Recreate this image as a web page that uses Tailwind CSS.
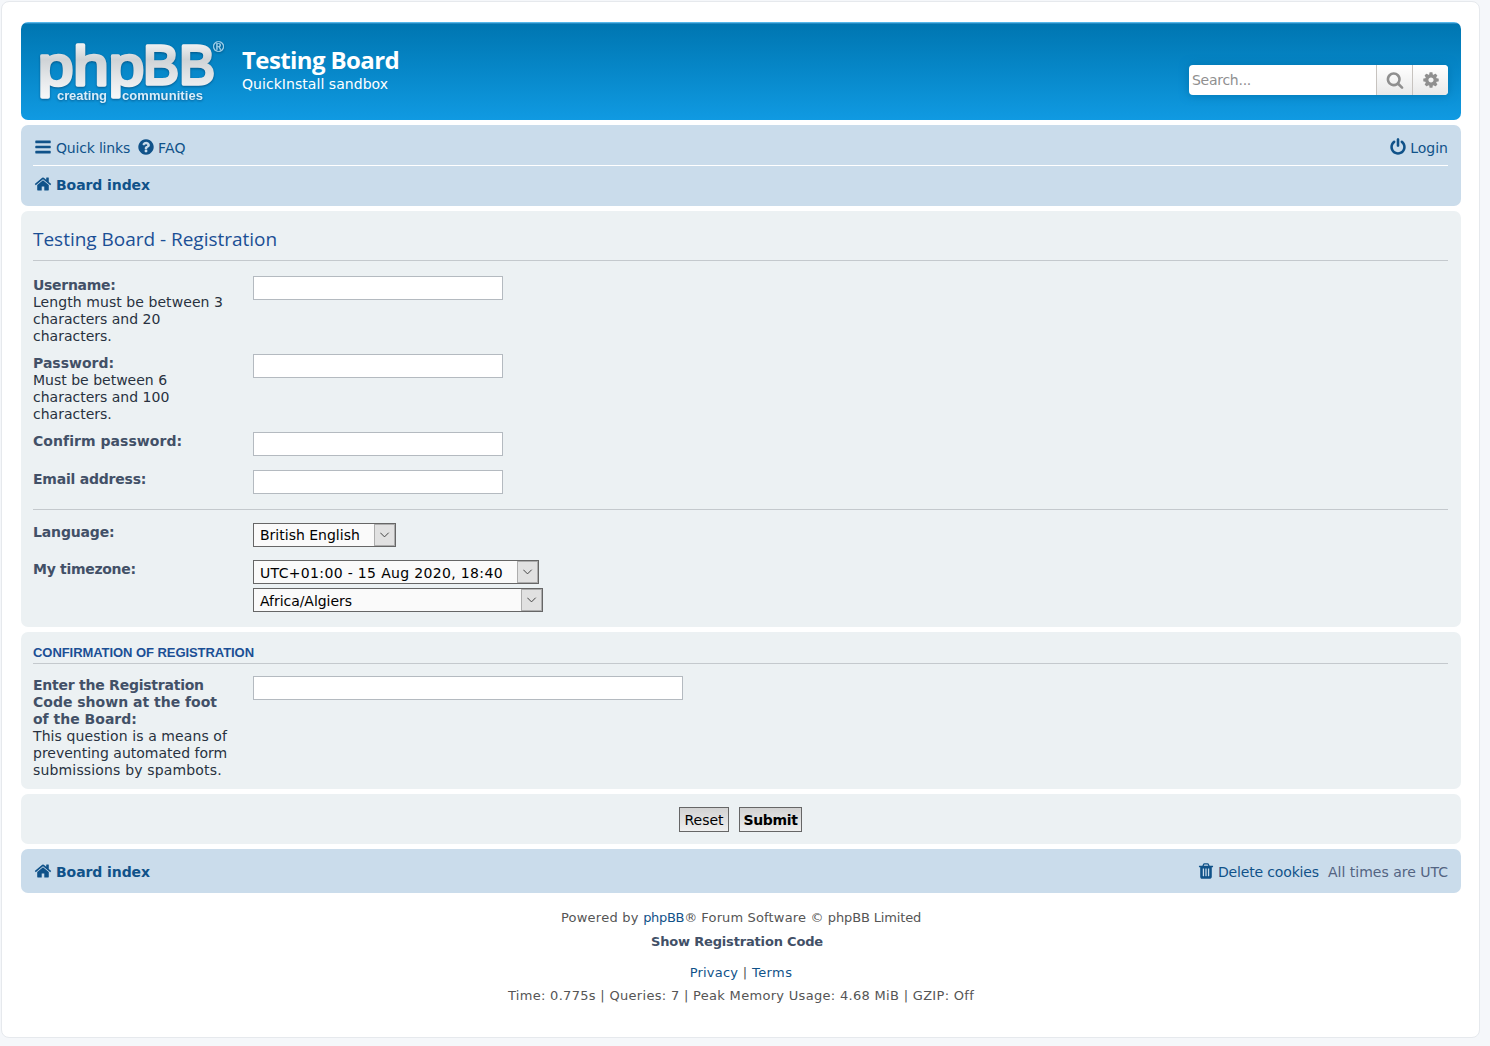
<!DOCTYPE html>
<html lang="en">
<head>
  <meta charset="UTF-8" />
  <meta name="viewport" content="width=device-width, initial-scale=1.0"/>
  <title>Testing Board - Registration</title>
  <script src="https://cdn.jsdelivr.net/npm/@tailwindcss/browser@4"></script>
</head>
<body class="bg-[#f5f7fa] p-px font-['DejaVu_Sans',sans-serif] text-[14px] leading-[17px] text-[#28313f]">

  <!-- Icon set -->
  <svg class="hidden">
    <symbol id="home" viewBox="0 0 1792 1792"><path d="M1472 992v480q0 26-19 45t-45 19h-384v-384h-256v384h-384q-26 0-45-19t-19-45v-480q0-1 .5-3t.5-3l575-474 575 474q1 2 1 6zm223-69l-62 74q-8 9-21 11h-3q-13 0-21-7l-692-577-692 577q-12 8-24 7-13-2-21-11l-62-74q-8-10-7-23.5t11-21.5l719-599q32-26 76-26t76 26l244 204v-195q0-14 9-23t23-9h192q14 0 23 9t9 23v408l219 182q10 8 11 21.5t-7 23.5z"/></symbol>
    <symbol id="bars" viewBox="0 0 1792 1792"><path d="M1664 1344v128q0 26-19 45t-45 19h-1408q-26 0-45-19t-19-45v-128q0-26 19-45t45-19h1408q26 0 45 19t19 45zm0-512v128q0 26-19 45t-45 19h-1408q-26 0-45-19t-19-45v-128q0-26 19-45t45-19h1408q26 0 45 19t19 45zm0-512v128q0 26-19 45t-45 19h-1408q-26 0-45-19t-19-45v-128q0-26 19-45t45-19h1408q26 0 45 19t19 45z"/></symbol>
    <symbol id="question" viewBox="0 0 1792 1792"><path d="M1024 1376v-192q0-14-9-23t-23-9h-192q-14 0-23 9t-9 23v192q0 14 9 23t23 9h192q14 0 23-9t9-23zm256-672q0-88-55.500-163t-138.500-116-170-41q-243 0-371 213-15 24 8 42l132 100q7 6 19 6 16 0 25-12 53-68 86-92 34-24 86-24 48 0 85.500 26t37.500 59q0 38-20 61t-68 45q-63 28-115.500 86.500t-52.500 125.500v36q0 14 9 23t23 9h192q14 0 23-9t9-23q0-19 21.500-49.500t54.500-49.500q32-18 49-28.500t46-35 44.500-48 28-60.500 12.500-81zm384 192q0 209-103 385.500t-279.500 279.500-385.500 103-385.500-103-279.500-279.500-103-385.500 103-385.500 279.500-279.500 385.500-103 385.500 103 279.500 279.500 103 385.500z"/></symbol>
    <symbol id="power" viewBox="0 0 1792 1792"><path d="M1664 896q0 156-61 298t-164 245-245 164-298 61-298-61-245-164-164-245-61-298q0-182 80.500-343t226.500-270q43-32 95.500-25t83.500 50q32 42 24.500 94.500t-49.500 84.500q-98 74-151.500 181t-53.500 228q0 104 40.500 198.500t109.500 163.500 163.500 109.500 198.500 40.500 198.500-40.500 163.500-109.500 109.500-163.500 40.500-198.500q0-121-53.500-228t-151.500-181q-42-32-49.500-84.500t24.500-94.500q31-43 84-50t95 25q146 109 226.500 270t80.500 343zm-640-768v640q0 52-38 90t-90 38-90-38-38-90v-640q0-52 38-90t90-38 90 38 38 90z"/></symbol>
    <symbol id="search" viewBox="0 0 1792 1792"><path d="M1216 832q0-185-131.500-316.500t-316.500-131.500-316.500 131.500-131.500 316.500 131.500 316.500 316.500 131.500 316.500-131.500 131.500-316.500zm512 832q0 52-38 90t-90 38q-54 0-90-38l-343-342q-179 124-399 124-143 0-273.500-55.500t-225-150-150-225-55.500-273.500 55.500-273.500 150-225 225-150 273.500-55.500 273.500 55.500 225 150 150 225 55.500 273.500q0 220-124 399l343 343q37 37 37 90z"/></symbol>
    <symbol id="cog" viewBox="0 0 1792 1792"><path d="M1152 896q0-106-75-181t-181-75-181 75-75 181 75 181 181 75 181-75 75-181zm512-109v222q0 12-8 23t-20 13l-185 28q-19 54-39 91 35 50 107 138 10 12 10 25t-9 23q-27 37-99 108t-94 71q-12 0-26-9l-138-108q-44 23-91 38-16 136-29 186-7 28-36 28h-222q-14 0-24.500-8.500t-11.500-21.500l-28-184q-49-16-90-37l-141 107q-10 9-25 9-14 0-25-11-126-114-165-168-7-10-7-23 0-12 8-23 15-21 51-66.500t54-70.500q-27-50-41-99l-183-27q-13-2-21-12.500t-8-23.500v-222q0-12 8-23t19-13l186-28q14-46 39-92-40-57-107-138-10-12-10-24 0-10 9-23 26-36 98.500-107.500t94.500-71.500q13 0 26 10l138 107q44-23 91-38 16-136 29-186 7-28 36-28h222q14 0 24.500 8.500t11.500 21.500l28 184q49 16 90 37l142-107q9-9 24-9 13 0 25 10 129 119 165 170 7 8 7 22 0 12-8 23-15 21-51 66.500t-54 70.500q26 50 41 98l183 28q13 2 21 12.500t8 23.500z"/></symbol>
    <symbol id="trash" viewBox="0 0 1792 1792"><path d="M704 1376v-704q0-14-9-23t-23-9h-64q-14 0-23 9t-9 23v704q0 14 9 23t23 9h64q14 0 23-9t9-23zm256 0v-704q0-14-9-23t-23-9h-64q-14 0-23 9t-9 23v704q0 14 9 23t23 9h64q14 0 23-9t9-23zm256 0v-704q0-14-9-23t-23-9h-64q-14 0-23 9t-9 23v704q0 14 9 23t23 9h64q14 0 23-9t9-23zm-544-992h448l-48-117q-7-9-17-11h-317q-10 2-17 11zm928 32v64q0 14-9 23t-23 9h-96v948q0 83-47 143.500t-113 60.500h-832q-66 0-113-58.500t-47-141.500v-952h-96q-14 0-23-9t-9-23v-64q0-14 9-23t23-9h309l70-167q15-37 54-63t79-26h320q40 0 79 26t54 63l70 167h309q14 0 23 9t9 23z"/></symbol>
    <symbol id="chevron" viewBox="0 0 10 6"><path d="M.3.7L4.500 4.900 8.700.7" fill="none" stroke="#444" stroke-width="1"/></symbol>
  </svg>

  <div class="h-[1037px] w-[1479px] rounded-lg border border-[#e6e9ed] bg-white pt-5 pl-[19px]">
    <div class="flex w-[1440px] flex-col gap-[5px]">

      <!-- Header -->
      <header class="flex h-[98px] items-start rounded-[7px] bg-linear-to-b from-[#6aceff] from-0% via-[#0076b1] via-[2px] to-[#109ae2] pr-[13px] pl-[13px] text-white">
        <svg class="mt-3 h-[80px] w-[208px] shrink-0 overflow-visible" viewBox="0 0 208 80">
          <defs>
            <linearGradient id="silver" gradientUnits="userSpaceOnUse" x1="0" y1="8" x2="0" y2="66">
              <stop offset="0" stop-color="#f4f5f6"/>
              <stop offset=".3" stop-color="#cfd3d6"/>
              <stop offset=".7" stop-color="#e9ebed"/>
              <stop offset="1" stop-color="#fafafa"/>
            </linearGradient>
          </defs>
          <g font-family="'Liberation Sans', sans-serif" class="drop-shadow-[0_1px_1px_rgba(0,50,90,0.55)]">
            <g fill="url(#silver)" stroke="url(#silver)" stroke-width="3.500" stroke-linejoin="round">
              <text x="4" y="50.500" font-size="56" textLength="106" lengthAdjust="spacingAndGlyphs">php</text>
              <text x="109" y="50" font-size="55" textLength="72" lengthAdjust="spacingAndGlyphs">BB</text>
            </g>
            <g font-size="13" font-weight="700" fill="#d9eefb">
              <text x="23" y="66" textLength="50">creating</text>
              <text x="88" y="66" textLength="81">communities</text>
            </g>
            <text x="179" y="18" font-size="15" fill="#a9d6ee" stroke="#a9d6ee" stroke-width=".4">®</text>
          </g>
        </svg>
        <div class="pt-[22px]">
          <h1 class="font-['Open_Sans',sans-serif] text-[24px] leading-8 font-bold tracking-[-0.6px]">Testing Board</h1>
          <p class="tracking-[0.05px]">QuickInstall sandbox</p>
        </div>
        <div class="mt-[43px] ml-auto flex h-[30px] w-[259px] overflow-hidden rounded bg-white text-[#8f8f8f] shadow-[0_0_10px_#0075b0]">
          <span class="flex-1 pt-[7px] pl-[3px] tracking-[-0.27px]">Search...</span>
          <span class="flex w-9 items-center justify-center border-l border-[#c7c3bf] bg-linear-to-b from-white to-[#e9e9e9]"><svg class="size-[18px] fill-current"><use href="#search"/></svg></span>
          <span class="flex w-9 items-center justify-center border-l border-[#c7c3bf] bg-linear-to-b from-white to-[#e9e9e9]"><svg class="size-[18px] fill-current"><use href="#cog"/></svg></span>
        </div>
      </header>

      <!-- Navigation -->
      <nav class="h-[81px] rounded-[7px] bg-[#cadceb] px-3 pr-[13px] text-[#105289]">
        <div class="flex h-[41px] border-b border-white pt-[15px]">
          <svg class="mt-[-2px] mr-1 ml-px size-[18px] fill-current"><use href="#bars"/></svg>
          <a href="#" class="tracking-[-0.19px]">Quick links</a>
          <svg class="mt-[-2px] mr-[3px] ml-[7px] size-[18px] fill-current"><use href="#question"/></svg>
          <a href="#" class="tracking-[0.2px]">FAQ</a>
          <svg class="mt-[-2px] mr-[3px] ml-auto size-[18px] fill-current"><use href="#power"/></svg>
          <a href="#">Login</a>
        </div>
        <div class="flex pt-[11px]">
          <svg class="mt-[-2px] mr-1 ml-px size-[18px] fill-current"><use href="#home"/></svg>
          <a href="#" class="font-bold tracking-[-0.08px]">Board index</a>
        </div>
      </nav>

      <!-- Registration form -->
      <section class="h-[416px] rounded-[7px] bg-[#ecf1f3] pr-[13px] pl-3">
        <h2 class="h-[50px] border-b border-[#c4c9cd] pt-[14px] font-['Open_Sans',sans-serif] text-[19px] leading-7 font-medium tracking-[-0.02px] text-[#1b4f95]">Testing Board - Registration</h2>
        <dl class="mt-[15px] mb-[9px] flex h-[69px]">
          <dt class="w-[220px] pt-px"><b class="tracking-[-0.3px] text-[#425067]">Username:</b><br><span class="tracking-[0.07px]">Length must be between 3</span><br>characters and 20<br>characters.</dt>
          <dd><input type="text" class="block h-6 w-[250px] border border-[#b4bac0] bg-white"></dd>
        </dl>
        <dl class="mb-[9px] flex h-[69px]">
          <dt class="w-[220px] pt-px"><b class="text-[#425067]">Password:</b><br>Must be between 6<br>characters and 100<br>characters.</dt>
          <dd><input type="password" class="block h-6 w-[250px] border border-[#b4bac0] bg-white"></dd>
        </dl>
        <dl class="mb-3.5 flex h-6">
          <dt class="w-[220px] pt-px font-bold tracking-[0.05px] text-[#425067]">Confirm password:</dt>
          <dd><input type="password" class="block h-6 w-[250px] border border-[#b4bac0] bg-white"></dd>
        </dl>
        <dl class="flex h-6">
          <dt class="w-[220px] pt-px font-bold tracking-[-0.22px] text-[#425067]">Email address:</dt>
          <dd><input type="text" class="block h-6 w-[250px] border border-[#b4bac0] bg-white"></dd>
        </dl>
        <hr class="mt-[15px] mb-[13px] border-[#c4c9cd]">
        <dl class="mb-[13px] flex h-6">
          <dt class="w-[220px] pt-px font-bold tracking-[-0.15px] text-[#425067]">Language:</dt>
          <dd class="flex h-6 w-[143px] justify-between border border-[#666] bg-[#fafafa] text-black">
            <span class="pt-[3px] pl-1.5">British English</span>
            <span class="flex w-[21px] items-center justify-center border border-[#adadad] bg-[#e1e1e1]"><svg class="h-1.5 w-2.5"><use href="#chevron"/></svg></span>
          </dd>
        </dl>
        <dl class="flex">
          <dt class="w-[220px] pt-px font-bold tracking-[-0.3px] text-[#425067]">My timezone:</dt>
          <dd class="flex flex-col gap-1 text-black">
            <div class="flex h-6 w-[286px] justify-between border border-[#666] bg-[#fafafa]">
              <span class="pt-1 pl-1.5 tracking-[0.34px]">UTC+01:00 - 15 Aug 2020, 18:40</span>
              <span class="flex w-[21px] items-center justify-center border border-[#adadad] bg-[#e1e1e1]"><svg class="h-1.5 w-2.5"><use href="#chevron"/></svg></span>
            </div>
            <div class="flex h-6 w-[290px] justify-between border border-[#666] bg-[#fafafa]">
              <span class="pt-1 pl-1.5 tracking-[-0.04px]">Africa/Algiers</span>
              <span class="flex w-[21px] items-center justify-center border border-[#adadad] bg-[#e1e1e1]"><svg class="h-1.5 w-2.5"><use href="#chevron"/></svg></span>
            </div>
          </dd>
        </dl>
      </section>

      <!-- Confirmation -->
      <section class="h-[157px] rounded-[7px] bg-[#ecf1f3] pr-[13px] pl-3">
        <h3 class="h-8 border-b border-[#c4c9cd] pt-3 font-['Liberation_Sans',sans-serif] text-[13px] font-bold tracking-[-0.06px] text-[#1b4f95]">CONFIRMATION OF REGISTRATION</h3>
        <dl class="mt-3 flex">
          <dt class="w-[220px] pt-px"><b class="text-[#425067]"><span class="tracking-[-0.24px]">Enter the Registration</span><br><span class="tracking-[0px]">Code shown at the foot</span><br><span class="tracking-[0px]">of the Board:</span></b><br><span class="tracking-[0.09px]">This question is a means of</span><br>preventing automated form<br><span class="tracking-[0.16px]">submissions by spambots.</span></dt>
          <dd><input type="text" class="block h-6 w-[430px] border border-[#b4bac0] bg-white"></dd>
        </dl>
      </section>

      <!-- Buttons -->
      <section class="flex h-[50px] justify-center gap-2.5 rounded-[7px] bg-[#ecf1f3] pt-[13px] pr-px text-black">
        <button class="h-[25px] w-[50px] border border-[#666] bg-linear-to-b from-[#d2d2d2] to-[#efefef] pt-0.5">Reset</button>
        <button class="h-[25px] w-[63px] border border-[#666] bg-linear-to-b from-[#d2d2d2] to-[#efefef] pt-0.5 font-bold tracking-[-0.35px]">Submit</button>
      </section>

      <!-- Footer bar -->
      <nav class="flex h-11 rounded-[7px] bg-[#cadceb] pt-[15px] pr-[13px] pl-3 text-[#105289]">
        <svg class="mt-[-2px] mr-1 ml-px size-[18px] fill-current"><use href="#home"/></svg>
        <a href="#" class="font-bold tracking-[-0.08px]">Board index</a>
        <svg class="mt-[-2px] mr-[3px] ml-auto size-[18px] fill-current"><use href="#trash"/></svg>
        <a href="#" class="tracking-[-0.15px]">Delete cookies</a>
        <span class="ml-[9px] text-[#536482]">All times are UTC</span>
      </nav>
    </div>

    <!-- Copyright -->
    <footer class="w-[1440px] pt-4 text-center text-[13px] text-[#555]">
      <p><span class="tracking-[0.25px]">Powered by </span><a href="#" class="tracking-[-0.3px] text-[#105289]">phpBB</a>® <span class="tracking-[0.15px]">Forum Software © </span><span class="tracking-[-0.15px]">phpBB Limited</span></p>
      <p class="mt-[7px] pr-2 font-bold tracking-[-0.17px] text-[#425067]">Show Registration Code</p>
      <p class="mt-[14px] tracking-[0.4px]"><a href="#" class="tracking-[0.2px] text-[#105289]">Privacy</a> | <a href="#" class="text-[#105289]">Terms</a></p>
      <p class="mt-1.5 tracking-[0.307px]">Time: 0.775s | Queries: 7 | Peak Memory Usage: 4.68 MiB | GZIP: Off</p>
    </footer>
  </div>
</body>
</html>
